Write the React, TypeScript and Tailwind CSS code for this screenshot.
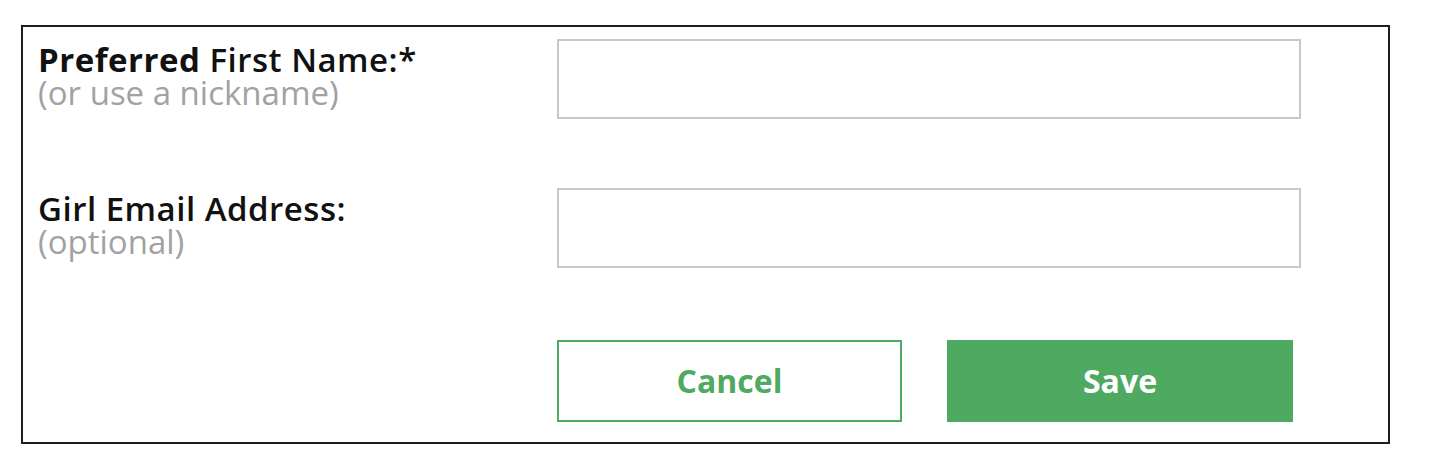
export default function App() {
    return (
        <div className="min-h-screen bg-white pt-[25px] pl-[21px]" style={{ fontFamily: "'Open Sans', sans-serif" }}>
            <div className="w-[1369px] h-[419px] border-2 border-[#1e1e1e] pt-[12px] pl-[15px] flex flex-col">
                {/* First name */}
                <div className="flex">
                    <div className="w-[519px] mt-[4px] text-[33px] leading-[33px]">
                        <div className="text-[#111] font-semibold tracking-[0.5px]">
                            <span className="font-bold">Preferred</span> First Name:*
                        </div>
                        <div className="text-[#a2a2a2] font-medium">(or use a nickname)</div>
                    </div>
                    <input
                        type="text"
                        className="w-[744px] h-[80px] border-2 border-[#c8c8c8] outline-none"
                    />
                </div>

                {/* Email */}
                <div className="flex mt-[69px]">
                    <div className="w-[519px] mt-[4px] text-[33px] leading-[33px]">
                        <div className="text-[#111] font-semibold tracking-[0.5px]">Girl Email Address:</div>
                        <div className="text-[#a2a2a2] font-medium">(optional)</div>
                    </div>
                    <input
                        type="email"
                        className="w-[744px] h-[80px] border-2 border-[#c8c8c8] outline-none"
                    />
                </div>

                {/* Actions */}
                <div className="flex mt-[72px] ml-[519px] gap-[45px]">
                    <button className="w-[345px] h-[82px] border-2 border-[#4eaa60] text-[#4eaa60] text-[32px] font-bold">
                        Cancel
                    </button>
                    <button className="w-[346px] h-[82px] bg-[#4eaa60] text-white text-[32px] font-bold">
                        Save
                    </button>
                </div>
            </div>
        </div>
    );
}
